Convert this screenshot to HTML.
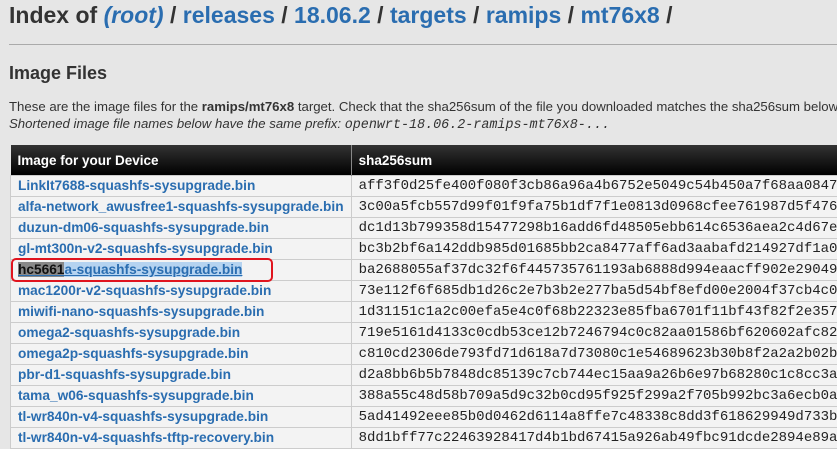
<!DOCTYPE html>
<html><head><meta charset="utf-8"><style>
body{margin:0;background:#e6e6e6;font-family:"Liberation Sans",Arial,sans-serif;color:#333;width:837px;height:444px;overflow:hidden;position:relative}
h1{position:absolute;left:9px;top:2px;margin:0;font-size:23px;font-weight:bold;white-space:nowrap;color:#333}
h1 a{color:#2a6db0;text-decoration:none}
hr{position:absolute;left:9px;top:44px;width:830px;margin:0;border:0;border-top:1px solid #aaa}
h2{position:absolute;left:9px;top:63px;margin:0;font-size:18px;font-weight:bold}
p{position:absolute;left:9px;top:98px;margin:0;font-size:13.2px;line-height:17px;white-space:nowrap}
p code{font-family:"Liberation Mono",monospace;font-style:italic;font-size:13.4px}
table{position:absolute;left:10px;top:145px;border-collapse:collapse;white-space:nowrap;table-layout:fixed}
th{background:linear-gradient(#333,#000);color:#fff;text-align:left;font-size:13.5px;height:30px;padding:0 7px;border-right:1px solid #888}
td{background:#f3f3f3;border:1px solid #ccc;height:20px;line-height:16px;padding:0 7px;font-size:13.7px;overflow:hidden}
td a{color:#2a6db0;font-weight:bold;text-decoration:none}
td.h{font-family:"Liberation Mono",monospace;font-size:14px;color:#222}
.sel{background:#b5d3f0;text-decoration:underline}
.sel b{background:#888;color:#111}
.box{position:absolute;left:11px;top:258px;width:258px;height:20px;border:2.5px solid #e0141e;border-radius:5px}
</style></head><body>
<h1>Index of <a><i>(root)</i></a> / <a>releases</a> / <a>18.06.2</a> / <a>targets</a> / <a>ramips</a> / <a>mt76x8</a> /</h1>
<hr>
<h2>Image Files</h2>
<p>These are the image files for the <b>ramips/mt76x8</b> target. Check that the sha256sum of the file you downloaded matches the sha256sum below.<br><i>Shortened image file names below have the same prefix: </i><code>openwrt-18.06.2-ramips-mt76x8-...</code></p>
<table>
<colgroup><col style="width:348px"><col style="width:600px"></colgroup>
<tr><th>Image for your Device</th><th>sha256sum</th></tr>
<tr><td><a>LinkIt7688-squashfs-sysupgrade.bin</a></td><td class="h">aff3f0d25fe400f080f3cb86a96a4b6752e5049c54b450a7f68aa0847</td></tr>
<tr><td><a>alfa-network_awusfree1-squashfs-sysupgrade.bin</a></td><td class="h">3c00a5fcb557d99f01f9fa75b1df7f1e0813d0968cfee761987d5f476</td></tr>
<tr><td><a>duzun-dm06-squashfs-sysupgrade.bin</a></td><td class="h">dc1d13b799358d15477298b16add6fd48505ebb614c6536aea2c4d67e</td></tr>
<tr><td><a>gl-mt300n-v2-squashfs-sysupgrade.bin</a></td><td class="h">bc3b2bf6a142ddb985d01685bb2ca8477aff6ad3aabafd214927df1a0</td></tr>
<tr><td><a class="sel"><b>hc5661</b>a-squashfs-sysupgrade.bin</a></td><td class="h">ba2688055af37dc32f6f445735761193ab6888d994eaacff902e29049</td></tr>
<tr><td><a>mac1200r-v2-squashfs-sysupgrade.bin</a></td><td class="h">73e112f6f685db1d26c2e7b3b2e277ba5d54bf8efd00e2004f37cb4c0</td></tr>
<tr><td><a>miwifi-nano-squashfs-sysupgrade.bin</a></td><td class="h">1d31151c1a2c00efa5e4c0f68b22323e85fba6701f11bf43f82f2e357</td></tr>
<tr><td><a>omega2-squashfs-sysupgrade.bin</a></td><td class="h">719e5161d4133c0cdb53ce12b7246794c0c82aa01586bf620602afc82</td></tr>
<tr><td><a>omega2p-squashfs-sysupgrade.bin</a></td><td class="h">c810cd2306de793fd71d618a7d73080c1e54689623b30b8f2a2a2b02b</td></tr>
<tr><td><a>pbr-d1-squashfs-sysupgrade.bin</a></td><td class="h">d2a8bb6b5b7848dc85139c7cb744ec15aa9a26b6e97b68280c1c8cc3a</td></tr>
<tr><td><a>tama_w06-squashfs-sysupgrade.bin</a></td><td class="h">388a55c48d58b709a5d9c32b0cd95f925f299a2f705b992bc3a6ecb0a</td></tr>
<tr><td><a>tl-wr840n-v4-squashfs-sysupgrade.bin</a></td><td class="h">5ad41492eee85b0d0462d6114a8ffe7c48338c8dd3f618629949d733b</td></tr>
<tr><td><a>tl-wr840n-v4-squashfs-tftp-recovery.bin</a></td><td class="h">8dd1bff77c22463928417d4b1bd67415a926ab49fbc91dcde2894e89a</td></tr>
</table>
<div class="box"></div>
</body></html>
